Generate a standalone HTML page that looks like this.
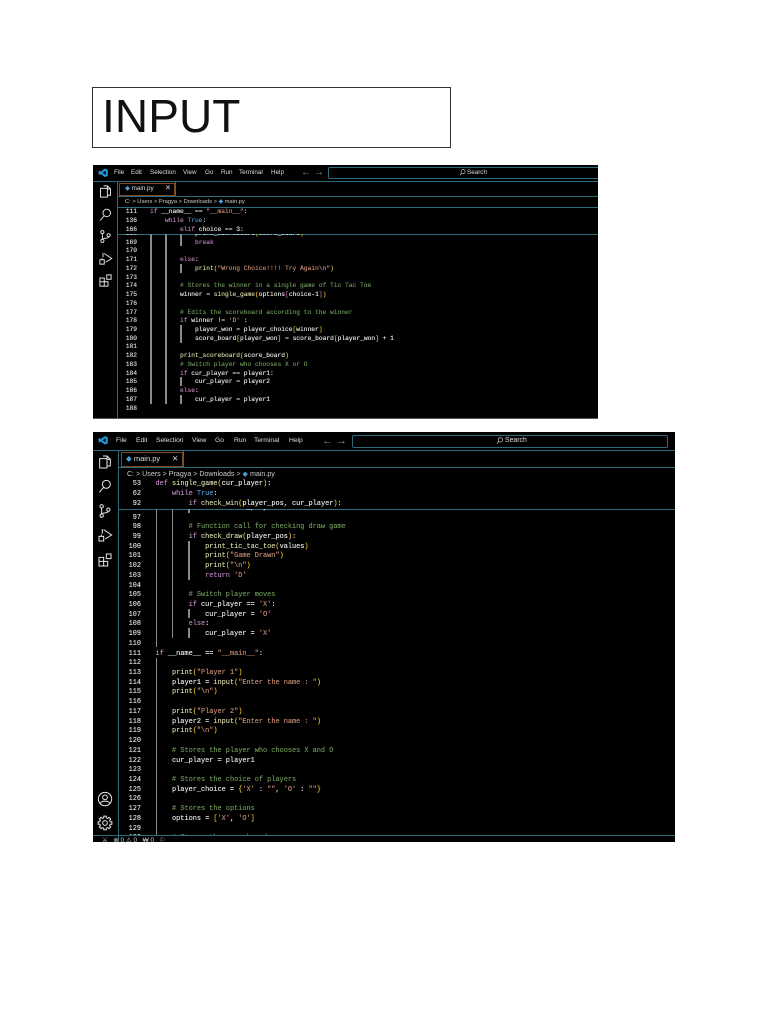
<!DOCTYPE html>
<html><head><meta charset="utf-8"><style>
html,body{margin:0;padding:0;background:#fff;width:768px;height:1024px;overflow:hidden}
.a{position:absolute}
.shot{position:absolute;background:#000;overflow:hidden;color:#e8e8e8;font-family:"Liberation Sans",sans-serif}
.ln{position:absolute;background:#2c6a7e}
.g{position:absolute;background:#8a8a8a;width:1.5px}
.m{position:absolute;white-space:pre;color:#ddd}
pre{position:absolute;margin:0;font-family:"Liberation Mono",monospace;color:#eee;-webkit-text-stroke:.12px currentColor}
.n{text-align:right;color:#e0e0d8}
.k{color:#c586c0}.f{color:#dcdcaa}.c{color:#6f9a5c}.s{color:#ce9178}.y{color:#e8c020}.p{color:#c678c0}.b{color:#569cd6}
.clip{position:absolute;overflow:hidden}
.bl{filter:blur(.35px)}
svg{position:absolute;fill:none;stroke:#e8e8e8;overflow:visible}
</style></head><body>

<svg width="0" height="0" style="position:absolute">
<defs>
<g id="files"><path d="M9 3h6l5 5v10h-5M15 3v5h5"/><path d="M4 7h11v14H4z"/></g>
<g id="search"><circle cx="14" cy="9.5" r="6"/><path d="M10 14L3.5 21.5"/></g>
<g id="git"><circle cx="7" cy="5" r="2.5"/><circle cx="7" cy="19" r="2.5"/><circle cx="17" cy="10" r="2.5"/><path d="M7 7.5v9M17 12.500c0 3-10 2-10 4"/></g>
<g id="debug"><path d="M10 4l12 8-10 6M8 3v7"/><path d="M3 14h7v7H3zM6.500 11.500v2"/></g>
<g id="ext"><path d="M3 8h7v6h6v7H3zM3 14h7v7"/><path d="M14 3h7v7h-7z"/></g>
<g id="acct"><circle cx="12" cy="12" r="10"/><circle cx="12" cy="9.500" r="3.500"/><path d="M5 19c1-5 13-5 14 0"/></g>
<g id="gear"><circle cx="12" cy="12" r="3.500"/><polygon transform="translate(12 12)" points="10.34,1.82 7.76,1.94 6.86,4.12 8.6,6.02 6.02,8.6 4.12,6.86 1.94,7.76 1.82,10.34 -1.82,10.34 -1.94,7.76 -4.12,6.86 -6.02,8.6 -8.6,6.02 -6.86,4.12 -7.76,1.94 -10.34,1.82 -10.34,-1.82 -7.76,-1.94 -6.86,-4.12 -8.6,-6.02 -6.02,-8.6 -4.12,-6.86 -1.94,-7.76 -1.82,-10.34 1.82,-10.34 1.94,-7.76 4.12,-6.86 6.02,-8.6 8.6,-6.02 6.86,-4.12 7.76,-1.94 10.34,-1.82"/></g>
<g id="mini"><circle cx="14" cy="9" r="7"/><path d="M9 14L3 21"/></g>
</defs>
</svg>

<div class="a" style="left:92px;top:87px;width:357px;height:59px;border:1px solid #333;background:#fff"></div>
<div class="a" style="left:102px;top:86px;font:46px/60px 'Liberation Sans',sans-serif;color:#111;letter-spacing:.1px">INPUT</div>

<!-- SCREENSHOT 1 -->
<div class="shot" style="left:93px;top:165px;width:505px;height:254px">
<div class="bl">
<svg style="left:5px;top:3px" width="10" height="10" viewBox="0 0 24 24"><path d="M2 8l15 11 4-2V6l-4-2L2 15" stroke="#1e9be0" stroke-width="5"/></svg>
<div class="m" style="left:21px;top:3px;font-size:6.300px;line-height:10px">File</div>
<div class="m" style="left:38px;top:3px;font-size:6.300px;line-height:10px">Edit</div>
<div class="m" style="left:57px;top:3px;font-size:6.300px;line-height:10px">Selection</div>
<div class="m" style="left:90px;top:3px;font-size:6.300px;line-height:10px">View</div>
<div class="m" style="left:112px;top:3px;font-size:6.300px;line-height:10px">Go</div>
<div class="m" style="left:128px;top:3px;font-size:6.300px;line-height:10px">Run</div>
<div class="m" style="left:146px;top:3px;font-size:6.300px;line-height:10px">Terminal</div>
<div class="m" style="left:178px;top:3px;font-size:6.300px;line-height:10px">Help</div>
<div class="m" style="left:208px;top:2px;font-size:10px;line-height:12px;color:#888">←</div>
<div class="m" style="left:221px;top:2px;font-size:10px;line-height:12px;color:#999">→</div>
<div class="a" style="left:235px;top:2px;width:300px;height:10px;border:1px solid #2c6a7e;border-radius:2px"></div>
<svg style="left:366px;top:4px;stroke-width:2" width="7" height="7" viewBox="0 0 24 24"><use href="#mini"/></svg>
<div class="m" style="left:374px;top:3px;font-size:6.300px;line-height:10px">Search</div>

<div class="ln" style="left:0;top:16px;width:505px;height:1px"></div>
<div class="ln" style="left:24px;top:16px;width:1px;height:238px"></div>
<div class="ln" style="left:82px;top:16px;width:1px;height:15px"></div>
<div class="a" style="left:26px;top:18px;width:54px;height:11px;border:1px solid #7a4a20"></div>
<div class="m" style="left:32px;top:19px;font-size:6.300px;line-height:10px"><span style="color:#4aa0d0">◆</span> main.py</div>
<div class="m" style="left:72px;top:19px;font-size:7px;line-height:10px">✕</div>
<div class="ln" style="left:24px;top:31px;width:481px;height:1px"></div>
<div class="ln" style="left:24px;top:42px;width:481px;height:1px"></div>
<div class="m" style="left:32px;top:32px;font-size:5.750px;line-height:10px;color:#ccc">C: &gt; Users &gt; Pragya &gt; Downloads &gt; <span style="color:#4aa0d0">◆</span> main.py</div>

<svg style="left:5px;top:19px;stroke-width:1.500" width="15" height="15" viewBox="0 0 24 24"><use href="#files"/></svg>
<svg style="left:5px;top:42px;stroke-width:1.500" width="15" height="15" viewBox="0 0 24 24"><use href="#search"/></svg>
<svg style="left:5px;top:64px;stroke-width:1.500" width="15" height="15" viewBox="0 0 24 24"><use href="#git"/></svg>
<svg style="left:5px;top:86px;stroke-width:1.500" width="15" height="15" viewBox="0 0 24 24"><use href="#debug"/></svg>
<svg style="left:5px;top:108px;stroke-width:1.500" width="15" height="15" viewBox="0 0 24 24"><use href="#ext"/></svg>

<pre class="n" style="left:24px;top:43.400px;width:20px;font-size:6.250px;line-height:8.740px">111
136
166</pre>
<pre style="left:57px;top:43.400px;font-size:6.250px;line-height:8.740px"><span class="k">if</span> __name__ == <span class="s">"__main__"</span>:
    <span class="k">while</span> <span class="b">True</span>:
        <span class="k">elif</span> choice == 3:</pre>
<div class="ln" style="left:25px;top:68.500px;width:480px;height:1px"></div>

<div class="g" style="left:57px;top:69px;height:170px"></div>
<div class="g" style="left:72px;top:69px;height:170px"></div>
<div class="g" style="left:87px;top:69px;height:12px"></div>
<div class="g" style="left:87px;top:99px;height:9px"></div>
<div class="g" style="left:87px;top:160px;height:18px"></div>
<div class="g" style="left:87px;top:212px;height:9px"></div>
<div class="g" style="left:87px;top:230px;height:9px"></div>

<div class="clip" style="left:25px;top:69px;width:480px;height:185px">
<pre class="n" style="left:-1px;top:-4.100px;width:20px;font-size:6.250px;line-height:8.740px">168
169
170
171
172
173
174
175
176
177
178
179
180
181
182
183
184
185
186
187
188</pre>
<pre style="left:32px;top:-4.100px;font-size:6.250px;line-height:8.740px">            print_scoreboard<span class="y">(</span>score_board<span class="y">)</span>
            <span class="k">break</span>

        <span class="k">else</span>:
            <span class="f">print</span><span class="y">(</span><span class="s">"Wrong Choice!!!! Try Again\n"</span><span class="y">)</span>

        <span class="c"># Stores the winner in a single game of Tic Tac Toe</span>
        winner = <span class="f">single_game</span><span class="y">(</span>options<span class="p">[</span>choice-1<span class="p">]</span><span class="y">)</span>

        <span class="c"># Edits the scoreboard according to the winner</span>
        <span class="k">if</span> winner != <span class="s">'D'</span> :
            player_won = player_choice<span class="y">[</span>winner<span class="y">]</span>
            score_board<span class="y">[</span>player_won<span class="y">]</span> = score_board<span class="y">[</span>player_won<span class="y">]</span> + 1

        <span class="f">print_scoreboard</span><span class="y">(</span>score_board<span class="y">)</span>
        <span class="c"># Switch player who chooses X or O</span>
        <span class="k">if</span> cur_player == player1:
            cur_player = player2
        <span class="k">else</span>:
            cur_player = player1
</pre>
</div>
</div>
<div class="a" style="left:0;top:253px;width:505px;height:1px;background:#555"></div>
</div>

<!-- SCREENSHOT 2 -->
<div class="shot" style="left:93px;top:432px;width:582px;height:410px">
<div class="bl">
<svg style="left:5px;top:3px" width="10" height="11" viewBox="0 0 24 24"><path d="M2 8l15 11 4-2V6l-4-2L2 15" stroke="#1e9be0" stroke-width="5"/></svg>
<div class="m" style="left:23px;top:4px;font-size:6.700px;line-height:10px">File</div>
<div class="m" style="left:43px;top:4px;font-size:6.700px;line-height:10px">Edit</div>
<div class="m" style="left:63px;top:4px;font-size:6.700px;line-height:10px">Selection</div>
<div class="m" style="left:99px;top:4px;font-size:6.700px;line-height:10px">View</div>
<div class="m" style="left:122px;top:4px;font-size:6.700px;line-height:10px">Go</div>
<div class="m" style="left:141px;top:4px;font-size:6.700px;line-height:10px">Run</div>
<div class="m" style="left:161px;top:4px;font-size:6.700px;line-height:10px">Terminal</div>
<div class="m" style="left:196px;top:4px;font-size:6.700px;line-height:10px">Help</div>
<div class="m" style="left:229px;top:3px;font-size:11px;line-height:12px;color:#888">←</div>
<div class="m" style="left:243px;top:3px;font-size:11px;line-height:12px;color:#999">→</div>
<div class="a" style="left:259px;top:3px;width:314px;height:11px;border:1px solid #2c6a7e;border-radius:2px"></div>
<svg style="left:403px;top:5px;stroke-width:2" width="7.500" height="7.500" viewBox="0 0 24 24"><use href="#mini"/></svg>
<div class="m" style="left:412px;top:4px;font-size:6.900px;line-height:10px">Search</div>

<div class="ln" style="left:0;top:18px;width:582px;height:1px"></div>
<div class="ln" style="left:25px;top:18px;width:1px;height:392px"></div>
<div class="ln" style="left:90px;top:18px;width:1px;height:17px"></div>
<div class="a" style="left:28px;top:20px;width:60px;height:13px;border:1px solid #7a4a20"></div>
<div class="m" style="left:33px;top:22px;font-size:7.500px;line-height:10px"><span style="color:#4aa0d0">◆</span> main.py</div>
<div class="m" style="left:79px;top:22px;font-size:7.500px;line-height:10px">✕</div>
<div class="ln" style="left:25px;top:35px;width:557px;height:1px"></div>
<div class="m" style="left:34px;top:37px;font-size:7.100px;line-height:10px;color:#ccc">C: &gt; Users &gt; Pragya &gt; Downloads &gt; <span style="color:#4aa0d0">◆</span> main.py</div>

<svg style="left:4px;top:22px;stroke-width:1.500" width="16" height="16" viewBox="0 0 24 24"><use href="#files"/></svg>
<svg style="left:4px;top:46px;stroke-width:1.500" width="16" height="16" viewBox="0 0 24 24"><use href="#search"/></svg>
<svg style="left:4px;top:71px;stroke-width:1.500" width="16" height="16" viewBox="0 0 24 24"><use href="#git"/></svg>
<svg style="left:4px;top:95px;stroke-width:1.500" width="16" height="16" viewBox="0 0 24 24"><use href="#debug"/></svg>
<svg style="left:4px;top:120px;stroke-width:1.500" width="16" height="16" viewBox="0 0 24 24"><use href="#ext"/></svg>
<svg style="left:4px;top:359px;stroke-width:1.500" width="16" height="16" viewBox="0 0 24 24"><use href="#acct"/></svg>
<svg style="left:4px;top:383px;stroke-width:1.500" width="16" height="16" viewBox="0 0 24 24"><use href="#gear"/></svg>

<pre class="n" style="left:25px;top:47px;width:23px;font-size:6.900px;line-height:10px">53
62
92</pre>
<pre style="left:62.500px;top:47px;font-size:6.900px;line-height:10px"><span class="k">def</span> <span class="f">single_game</span><span class="y">(</span>cur_player<span class="y">)</span>:
    <span class="k">while</span> <span class="b">True</span>:
        <span class="k">if</span> <span class="f">check_win</span><span class="y">(</span>player_pos, cur_player<span class="y">)</span>:</pre>
<div class="ln" style="left:26px;top:76.500px;width:556px;height:1px"></div>

<div class="g" style="left:62.500px;top:77px;height:138px"></div>
<div class="g" style="left:78.500px;top:77px;height:129px"></div>
<div class="g" style="left:95px;top:77px;height:4px"></div>
<div class="g" style="left:95px;top:109px;height:39px"></div>
<div class="g" style="left:95px;top:177px;height:9px"></div>
<div class="g" style="left:95px;top:196px;height:10px"></div>
<div class="g" style="left:62.500px;top:226px;height:177px"></div>

<div class="clip" style="left:26px;top:77px;width:556px;height:326px">
<pre class="n" style="left:-1px;top:-5.200px;width:23px;font-size:6.900px;line-height:9.720px">96
97
98
99
100
101
102
103
104
105
106
107
108
109
110
111
112
113
114
115
116
117
118
119
120
121
122
123
124
125
126
127
128
129
130</pre>
<pre style="left:36.500px;top:-5.200px;font-size:6.900px;line-height:9.720px">            <span class="k">return</span> cur_player

        <span class="c"># Function call for checking draw game</span>
        <span class="k">if</span> <span class="f">check_draw</span><span class="y">(</span>player_pos<span class="y">)</span>:
            <span class="f">print_tic_tac_toe</span><span class="y">(</span>values<span class="y">)</span>
            <span class="f">print</span><span class="y">(</span><span class="s">"Game Drawn"</span><span class="y">)</span>
            <span class="f">print</span><span class="y">(</span><span class="s">"\n"</span><span class="y">)</span>
            <span class="k">return</span> <span class="s">'D'</span>

        <span class="c"># Switch player moves</span>
        <span class="k">if</span> cur_player == <span class="s">'X'</span>:
            cur_player = <span class="s">'O'</span>
        <span class="k">else</span>:
            cur_player = <span class="s">'X'</span>

<span class="k">if</span> __name__ == <span class="s">"__main__"</span>:

    <span class="f">print</span><span class="y">(</span><span class="s">"Player 1"</span><span class="y">)</span>
    player1 = <span class="f">input</span><span class="y">(</span><span class="s">"Enter the name : "</span><span class="y">)</span>
    <span class="f">print</span><span class="y">(</span><span class="s">"\n"</span><span class="y">)</span>

    <span class="f">print</span><span class="y">(</span><span class="s">"Player 2"</span><span class="y">)</span>
    player2 = <span class="f">input</span><span class="y">(</span><span class="s">"Enter the name : "</span><span class="y">)</span>
    <span class="f">print</span><span class="y">(</span><span class="s">"\n"</span><span class="y">)</span>

    <span class="c"># Stores the player who chooses X and O</span>
    cur_player = player1

    <span class="c"># Stores the choice of players</span>
    player_choice = <span class="y">{</span><span class="s">'X'</span> : <span class="s">""</span>, <span class="s">'O'</span> : <span class="s">""</span><span class="y">}</span>

    <span class="c"># Stores the options</span>
    options = <span class="y">[</span><span class="s">'X'</span>, <span class="s">'O'</span><span class="y">]</span>

    <span class="c"># Stores the scoreboard</span></pre>
</div>
<div class="ln" style="left:0;top:403px;width:582px;height:1px"></div>
<div class="m" style="left:9px;top:403.500px;font-size:6.500px;line-height:9px;color:#ccc">⚔   ⊗ 0 ⚠ 0   ₩ 0   ⚐</div>
</div>
</div>
</body></html>
